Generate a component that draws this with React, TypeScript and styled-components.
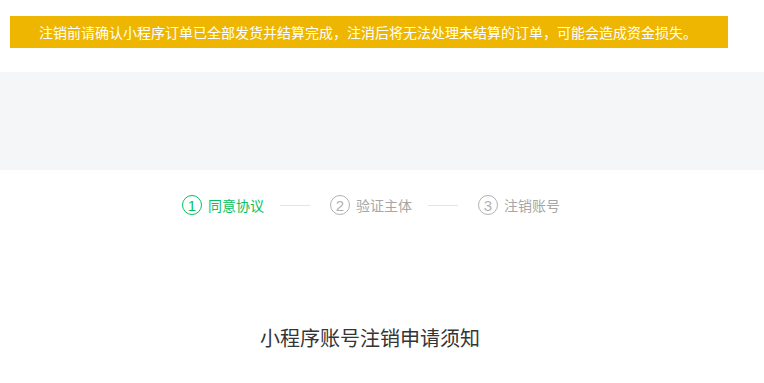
import React from "react";
import styled, { createGlobalStyle } from "styled-components";

const Global = createGlobalStyle`
  html, body { margin: 0; padding: 0; background: #fff; }
  body { font-family: "Noto Sans CJK SC", "Noto Sans", sans-serif; }
`;

const Page = styled.div`
  width: 764px;
  height: 383px;
  overflow: hidden;
  display: flex;
  flex-direction: column;
`;

const Banner = styled.div`
  margin: 16px 36px 0 10px;
  height: 32px;
  background: #eeb600;
  color: #fff;
  font-size: 14px;
  line-height: 32px;
  padding-left: 29px;
  white-space: nowrap;
`;

const GrayBand = styled.div`
  margin-top: 24px;
  height: 98px;
  background: #f5f6f8;
`;

const Steps = styled.div`
  display: flex;
  align-items: center;
  padding: 25px 0 0 182px;
  height: 20px;
`;

const Step = styled.div<{ $active?: boolean }>`
  display: flex;
  align-items: center;
  gap: 6px;
  color: ${(p) => (p.$active ? "#07c160" : "#a6a6a6")};
  font-size: 14px;
`;

const Circle = styled.span<{ $active?: boolean }>`
  box-sizing: border-box;
  width: 20px;
  height: 20px;
  border-radius: 50%;
  border: 1px solid ${(p) => (p.$active ? "#07c160" : "#b2b2b2")};
  color: ${(p) => (p.$active ? "#07c160" : "#b2b2b2")};
  display: flex;
  align-items: center;
  justify-content: center;
  font-family: "Liberation Sans", sans-serif;
  font-size: 15px;
  font-weight: 300;
  line-height: 1;
`;

const Label = styled.span`
  line-height: 20px;
  white-space: nowrap;
  min-width: 56px;
`;

const Line = styled.span`
  width: 30px;
  height: 1px;
  background: #e4e4e4;
  margin: 0 20px 0 16px;
`;

const Title = styled.h1`
  margin: 111px 0 0 0;
  padding-right: 24px;
  text-align: center;
  font-size: 20px;
  font-weight: 400;
  color: #353535;
  line-height: 24px;
`;

const steps = ["同意协议", "验证主体", "注销账号"];

export default function App() {
  return (
    <Page>
      <Global />
      <Banner>
        注销前请确认小程序订单已全部发货并结算完成，注消后将无法处理未结算的订单，可能会造成资金损失。
      </Banner>
      <GrayBand />
      <Steps>
        {steps.map((s, i) => (
          <React.Fragment key={s}>
            {i > 0 && <Line />}
            <Step $active={i === 0}>
              <Circle $active={i === 0}>{i + 1}</Circle>
              <Label>{s}</Label>
            </Step>
          </React.Fragment>
        ))}
      </Steps>
      <Title>小程序账号注销申请须知</Title>
    </Page>
  );
}
